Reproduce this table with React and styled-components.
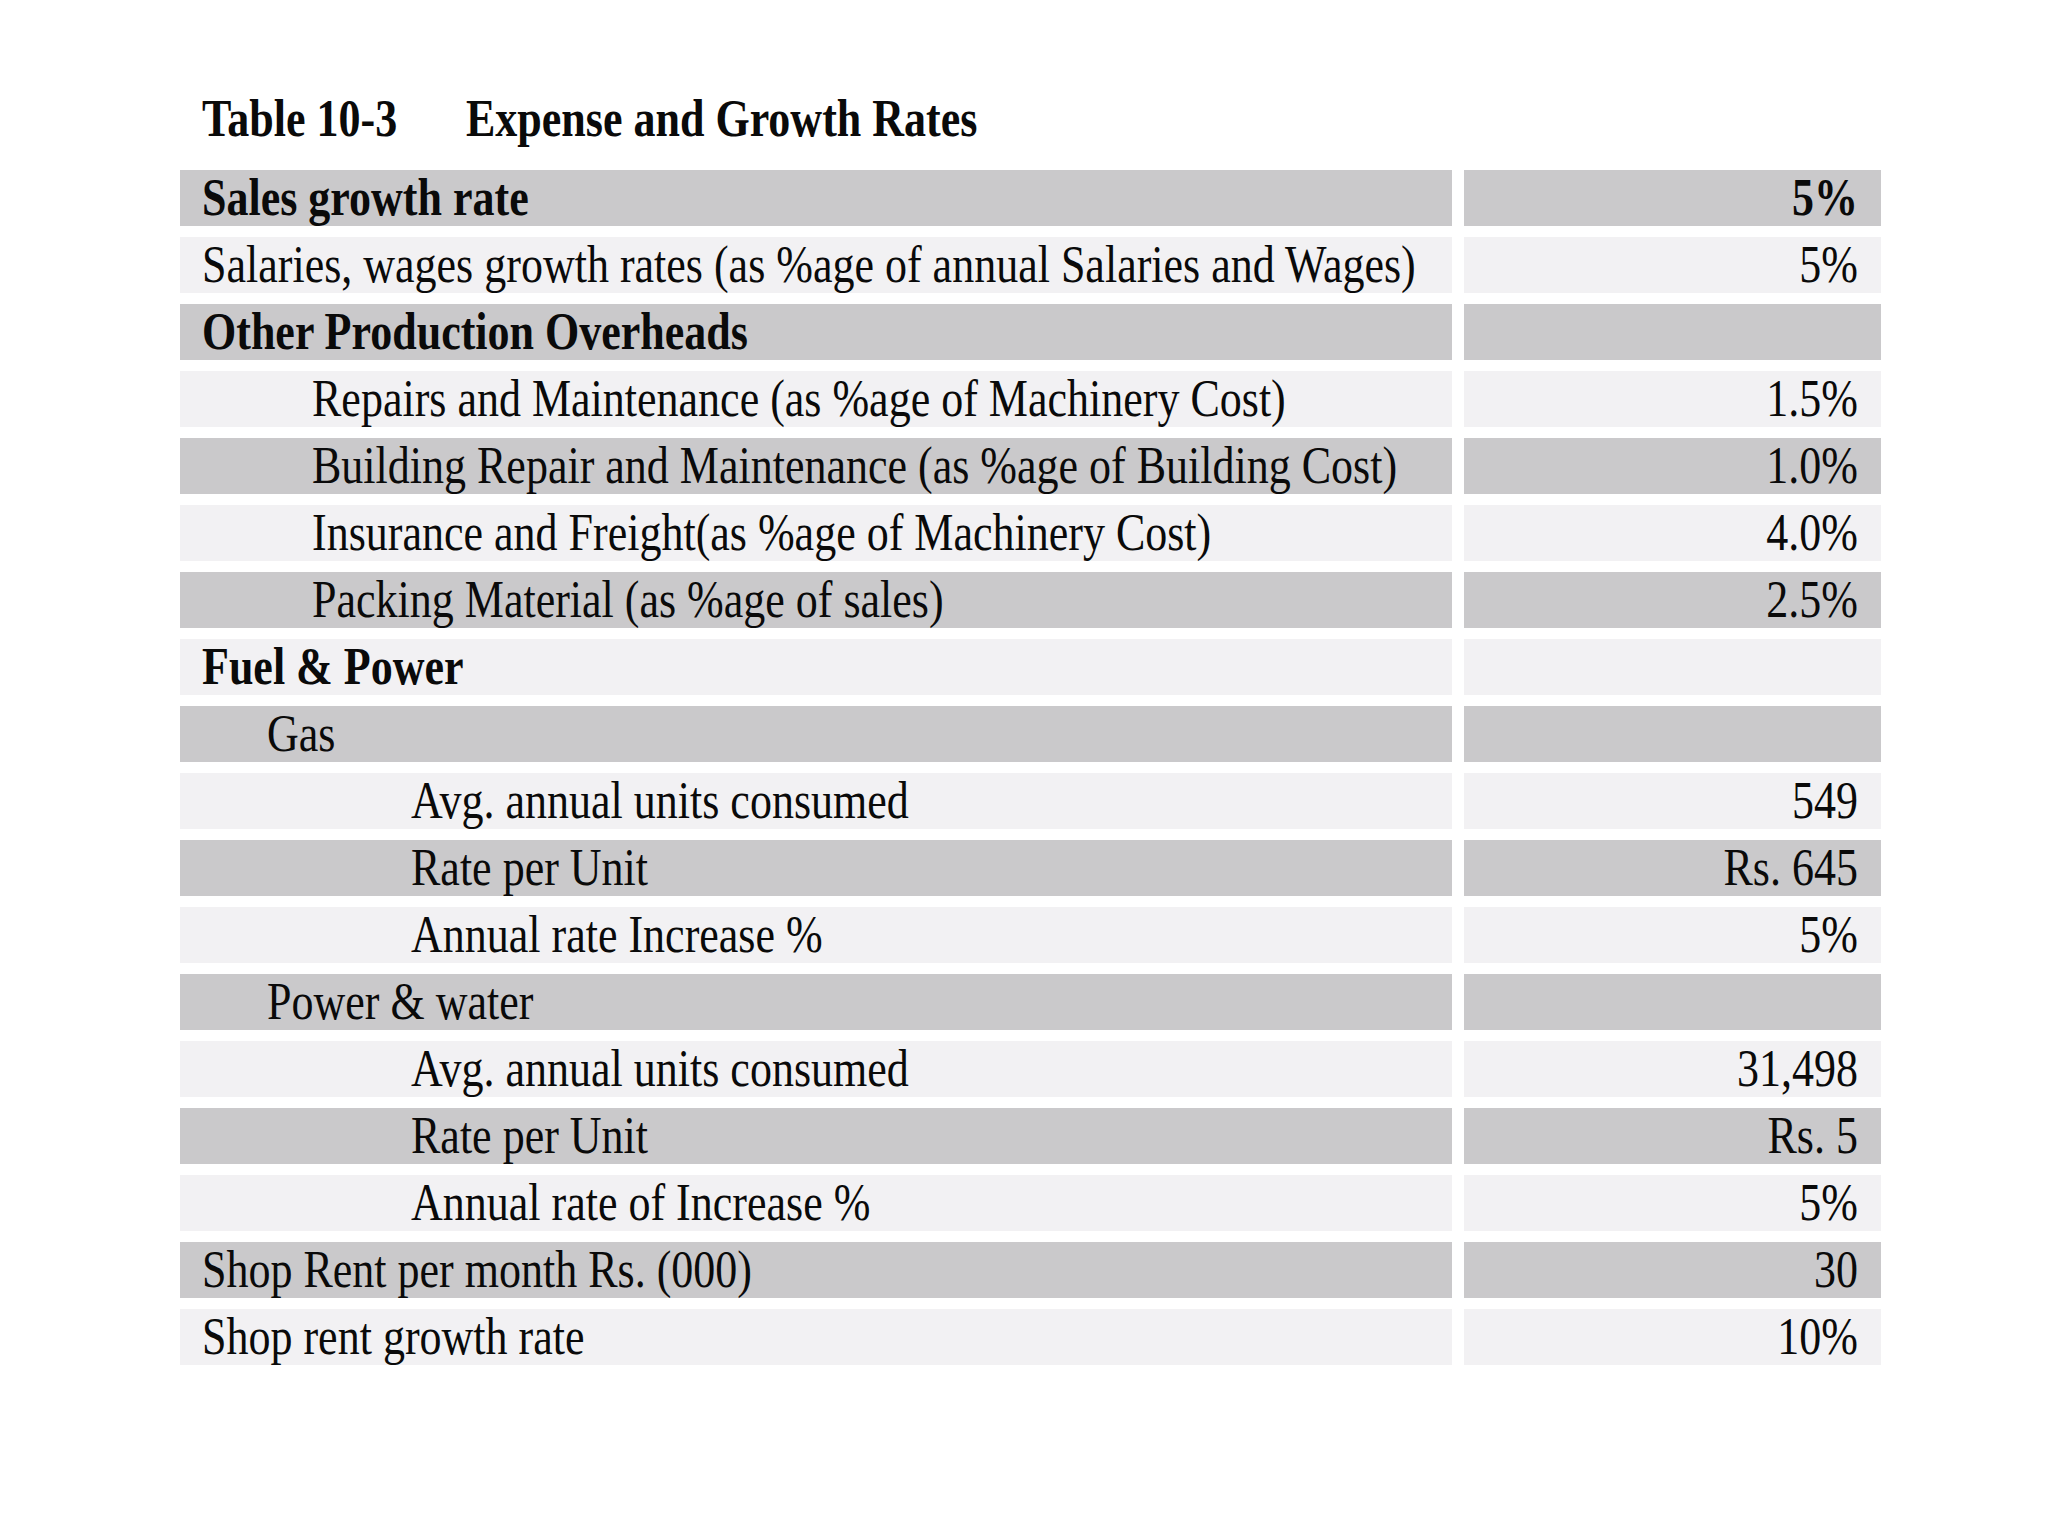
import React from 'react';
import styled, { createGlobalStyle } from 'styled-components';

const GlobalStyle = createGlobalStyle`
  html, body {
    margin: 0;
    padding: 0;
    background: #ffffff;
  }
  body {
    font-family: "Liberation Serif", "Times New Roman", serif;
    color: #0a0a0a;
  }
`;

const Page = styled.div`
  width: 2048px;
  height: 1536px;
  box-sizing: border-box;
  padding: 88px 0 0 180px;
  background: #ffffff;
`;

const Caption = styled.div`
  display: flex;
  align-items: center;
  height: 60px;
  padding-left: 22px;
  margin-bottom: 22px;
  font-size: 44px;
  font-weight: bold;
`;

const CaptionNo = styled.span`
  display: inline-block;
  width: 264px;
  transform: scaleY(1.18);
`;

const CaptionTitle = styled.span`
  display: inline-block;
  transform: scaleY(1.18);
`;

const Table = styled.div`
  display: grid;
  grid-template-columns: 1272px 417px;
  grid-auto-rows: 56px;
  column-gap: 12px;
  row-gap: 11px;
`;

const Cell = styled.div`
  display: flex;
  align-items: center;
  justify-content: ${(p) => (p.$value ? 'flex-end' : 'flex-start')};
  box-sizing: border-box;
  padding: 0 23px 0 ${(p) => 22 + (p.$indent || 0)}px;
  background: ${(p) => (p.$dark ? '#cac9cb' : '#f2f1f3')};
  font-size: 44px;
  font-weight: ${(p) => (p.$bold ? 'bold' : 'normal')};
  white-space: nowrap;
`;

const Text = styled.span`
  display: inline-block;
  transform: scaleY(1.18);
  transform-origin: center 60%;
`;

const rows = [
  { label: 'Sales growth rate', value: '5%', bold: true },
  { label: 'Salaries, wages growth rates (as %age of annual Salaries and Wages)', value: '5%' },
  { label: 'Other Production Overheads', value: '', bold: true },
  { label: 'Repairs and Maintenance (as %age of Machinery Cost)', value: '1.5%', indent: 110 },
  { label: 'Building Repair and Maintenance (as %age of Building Cost)', value: '1.0%', indent: 110 },
  { label: 'Insurance and Freight(as %age of Machinery Cost)', value: '4.0%', indent: 110 },
  { label: 'Packing Material (as %age of sales)', value: '2.5%', indent: 110 },
  { label: 'Fuel & Power', value: '', bold: true },
  { label: 'Gas', value: '', indent: 65 },
  { label: 'Avg. annual units consumed', value: '549', indent: 209 },
  { label: 'Rate per Unit', value: 'Rs. 645', indent: 209 },
  { label: 'Annual rate Increase %', value: '5%', indent: 209 },
  { label: 'Power & water', value: '', indent: 65 },
  { label: 'Avg. annual units consumed', value: '31,498', indent: 209 },
  { label: 'Rate per Unit', value: 'Rs. 5', indent: 209 },
  { label: 'Annual rate of Increase %', value: '5%', indent: 209 },
  { label: 'Shop Rent per month Rs. (000)', value: '30' },
  { label: 'Shop rent growth rate', value: '10%' },
];

export default function App() {
  return (
    <Page>
      <GlobalStyle />
      <Caption>
        <CaptionNo>Table 10-3</CaptionNo>
        <CaptionTitle>Expense and Growth Rates</CaptionTitle>
      </Caption>
      <Table>
        {rows.map((row, i) => {
          const dark = i % 2 === 0;
          return (
            <React.Fragment key={i}>
              <Cell $dark={dark} $bold={row.bold} $indent={row.indent}>
                <Text>{row.label}</Text>
              </Cell>
              <Cell $dark={dark} $bold={row.bold} $value>
                <Text>{row.value}</Text>
              </Cell>
            </React.Fragment>
          );
        })}
      </Table>
    </Page>
  );
}
